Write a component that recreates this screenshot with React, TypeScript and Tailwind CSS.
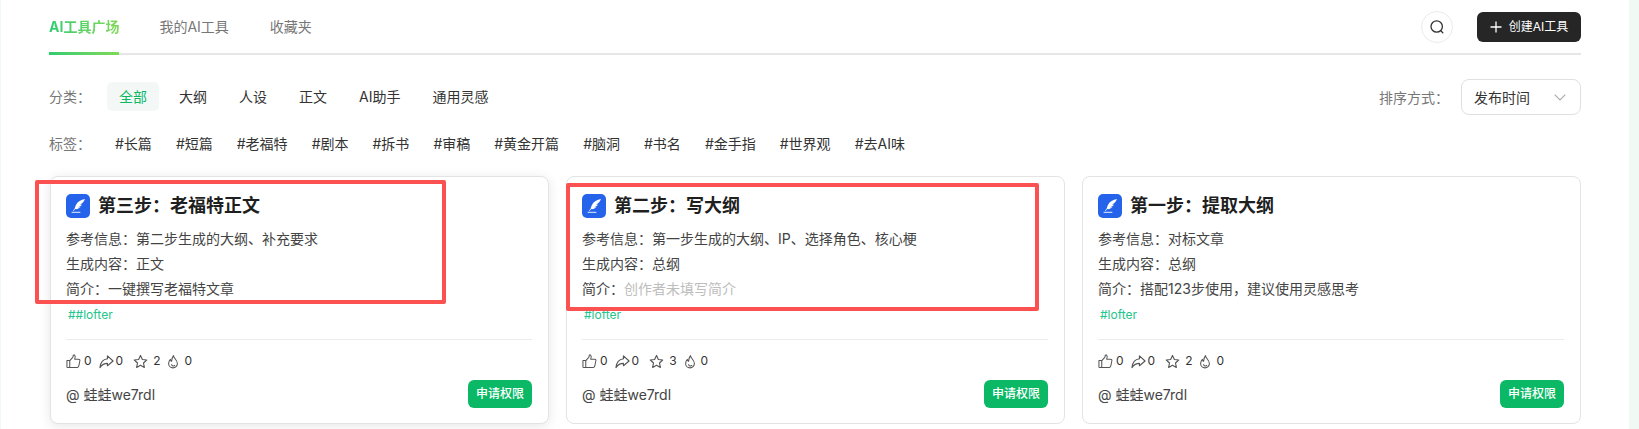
import React from "react";

const font = { fontFamily: 'Inter, "Noto Sans CJK SC", "Noto Sans", sans-serif' };
const C = "\uFF1A";
const D = "\uFF0C";

function Quill() {
  return (
    <svg viewBox="0 0 24 24" className="w-[24px] h-[24px] shrink-0">
      <rect width="24" height="24" rx="5" fill="#2563eb" />
      <path d="M19 5c-4 .6-7.500 2.600-9.200 6.200-.6 1.300-1 2.600-1.200 3.600l-1.600 2 .5.3 1.800-2c2 .2 4-.6 5.200-2-1 .2-1.800.1-2.400-.1 1.600-.3 3-1 4-2.200-.8.1-1.400 0-1.900-.2C16.600 9.200 18 7.300 19 5z" fill="#fff" />
      <path d="M6 18.300h8" stroke="#fff" strokeWidth="1" strokeLinecap="round" opacity="0.9" />
    </svg>
  );
}

const Like = () => (
  <svg viewBox="0 0 16 16" className="w-[15px] h-[15px]" fill="none" stroke="#555" strokeWidth="1.100" strokeLinejoin="round">
    <path d="M1 7h3v7.500H1.800a.8.800 0 0 1-.8-.8z" />
    <path d="M4 7l3-3.200c.4-.5.700-1.200.700-2.300 0-.6.900-.8 1.500-.2.800.8.800 2.400.1 4.200h4.200c.9 0 1.500.8 1.300 1.700l-1.200 5.800c-.2.900-.8 1.500-1.700 1.500H4" />
  </svg>
);
const Share = () => (
  <svg viewBox="0 0 16 16" className="w-[15px] h-[15px]" fill="none" stroke="#555" strokeWidth="1.200" strokeLinejoin="round">
    <path d="M9 2l6 5.500L9 12.500V10C5.500 10 3 11.500 1 14.500 1.500 9.500 4.500 5.500 9 5z" />
  </svg>
);
const Star = () => (
  <svg viewBox="0 0 16 16" className="w-[15px] h-[15px]" fill="none" stroke="#555" strokeWidth="1.200" strokeLinejoin="round">
    <path d="M8 1.500l2 4.300 4.600.6-3.400 3.200.9 4.700L8 12l-4.100 2.300.9-4.700L1.400 6.400 6 5.800z" />
  </svg>
);
const Flame = () => (
  <svg viewBox="0 0 16 16" className="w-[14px] h-[15px]" fill="none" stroke="#555" strokeWidth="1.200" strokeLinejoin="round" strokeLinecap="round">
    <path d="M8.500 1.200C9 4.500 13 6.500 13 10.300A5 5 0 0 1 3 10.300C3 8 4.200 6.300 5 5.500c.2 1.200.7 1.900 1.400 2.300.2-2.600.8-5 2.100-6.600z" />
    <path d="M6.500 11.500a2 2 0 0 0 3.500 1" />
  </svg>
);

function Stat({ icon, n, cls }: { icon: React.ReactNode; n: number; cls: string }) {
  return (
    <div className={`flex items-center ${cls}`}>
      {icon}
      <span className="text-[12px] text-[#333]">{n}</span>
    </div>
  );
}

type Card = {
  title: string;
  ref_: string;
  gen: string;
  intro: string;
  muted?: boolean;
  tag: string;
  like: number;
  fwd: number;
  star: number;
  hot: number;
  shadow?: boolean;
  box?: string;
};

function ToolCard({ c }: { c: Card }) {
  return (
    <div
      className={`relative flex-1 h-[248px] bg-white rounded-[8px] border border-[#e3e3e3] pl-[15px] pr-[16px] pt-[17px] ${
        c.shadow ? "shadow-[0_2px_12px_rgba(0,0,0,0.10)]" : ""
      }`}
    >
      <div className="flex items-center gap-[8px] h-[24px]">
        <Quill />
        <span className="text-[18px] leading-[24px] font-bold text-[#1f1f1f]">{c.title}</span>
      </div>
      <div className="mt-[8px] text-[14px] leading-[25px] text-[#444]">
        <div>参考信息{C}{c.ref_}</div>
        <div>生成内容{C}{c.gen}</div>
        <div>
          简介{C}<span className={c.muted ? "text-[#bdbdbd]" : ""}>{c.intro}</span>
        </div>
      </div>
      <div className="mt-[1px] pl-[2px] text-[12px] leading-[25px] text-[#22c58b]">{c.tag}</div>
      <div className="mt-[12px] border-t border-[#ececec]" />
      <div className="mt-[13px] h-[16px] flex items-center">
        <Stat icon={<Like />} n={c.like} cls="gap-[3px]" />
        <Stat icon={<Share />} n={c.fwd} cls="gap-[2px] ml-[7px]" />
        <Stat icon={<Star />} n={c.star} cls="gap-[5px] ml-[10px]" />
        <Stat icon={<Flame />} n={c.hot} cls="gap-[4px] ml-[6px]" />
      </div>
      <div className="mt-[11px] flex items-center justify-between">
        <span className="text-[14px] text-[#444]">@ 蛙蛙we7rdl</span>
        <button className="w-[64px] h-[28px] rounded-[6px] bg-[#0bb866] text-white text-[12px] font-medium">申请权限</button>
      </div>
      {c.box && <div className={`absolute border-[4px] border-[#fb5151] rounded-[2px] pointer-events-none ${c.box}`} />}
    </div>
  );
}

const cards: Card[] = [
  {
    title: `第三步${C}老福特正文`,
    ref_: "第二步生成的大纲、补充要求",
    gen: "正文",
    intro: "一键撰写老福特文章",
    tag: "##lofter",
    like: 0,
    fwd: 0,
    star: 2,
    hot: 0,
    shadow: true,
    box: "left-[-16px] top-[3px] w-[411px] h-[124px]",
  },
  {
    title: `第二步${C}写大纲`,
    ref_: "第一步生成的大纲、IP、选择角色、核心梗",
    gen: "总纲",
    intro: "创作者未填写简介",
    muted: true,
    tag: "#lofter",
    like: 0,
    fwd: 0,
    star: 3,
    hot: 0,
    box: "left-[-1px] top-[6px] w-[473px] h-[128px]",
  },
  {
    title: `第一步${C}提取大纲`,
    ref_: "对标文章",
    gen: "总纲",
    intro: `搭配123步使用${D}建议使用灵感思考`,
    tag: "#lofter",
    like: 0,
    fwd: 0,
    star: 2,
    hot: 0,
  },
];

const cats = ["大纲", "人设", "正文", "AI助手", "通用灵感"];
const tags = ["#长篇", "#短篇", "#老福特", "#剧本", "#拆书", "#审稿", "#黄金开篇", "#脑洞", "#书名", "#金手指", "#世界观", "#去AI味"];

export default function App() {
  return (
    <div className="w-[1639px] h-[429px] overflow-hidden flex bg-[#f0f9f4]" style={font}>
      <div className="w-[1px] shrink-0" />
      <div className="w-[1628px] shrink-0 bg-white pl-[48px] pr-[48px]">
        <div className="h-[55px] border-b-2 border-[#e6e6e6] flex justify-between">
          <div className="flex gap-[41px] text-[14px]">
            <div className="relative h-[55px] pt-[17px] leading-[20px] font-bold">
              <span className="bg-gradient-to-r from-[#2ecc71] to-[#7ed957] bg-clip-text text-transparent">AI工具广场</span>
              <div className="absolute left-0 right-0 bottom-0 h-[3px] bg-gradient-to-r from-[#2ecc71] to-[#7ed957]" />
            </div>
            <div className="pt-[17px] leading-[20px] text-[#777] -ml-[1px]">我的AI工具</div>
            <div className="pt-[17px] leading-[20px] text-[#777]">收藏夹</div>
          </div>
          <div className="flex gap-[24px] pt-[11px]">
            <div className="w-[32px] h-[32px] rounded-full border border-[#ebebeb] flex items-center justify-center">
              <svg viewBox="0 0 16 16" className="w-[16px] h-[16px]" fill="none" stroke="#333" strokeWidth="1.300" strokeLinecap="round">
                <circle cx="7.700" cy="7.500" r="5.700" />
                <path d="M11.800 11.800l2 2" />
              </svg>
            </div>
            <button className="w-[104px] h-[30px] mt-[1px] rounded-[6px] bg-[#262626] text-white text-[12px] flex items-center justify-center gap-[7px]">
              <svg viewBox="0 0 12 12" className="w-[12px] h-[12px]" stroke="#fff" strokeWidth="1.300">
                <path d="M6 .5v11M.5 6h11" />
              </svg>
              创建AI工具
            </button>
          </div>
        </div>

        <div className="mt-[24px] h-[36px] flex items-center justify-between">
          <div className="flex items-center text-[14px] -translate-y-[1px]">
            <span className="text-[#777] w-[58px]">分类{C}</span>
            <div className="flex items-center gap-[8px] text-[#333]">
              <span className="px-[12px] h-[29px] leading-[29px] rounded-[5px] bg-[#f3f8f7] text-[#0bb866]">全部</span>
              {cats.map((c) => (
                <span key={c} className="px-[12px] h-[29px] leading-[29px]">
                  {c}
                </span>
              ))}
            </div>
          </div>
          <div className="flex items-center gap-[12px] text-[14px]">
            <span className="text-[#777]">排序方式{C}</span>
            <div className="w-[120px] h-[36px] rounded-[8px] border border-[#e0e0e0] pl-[12px] pr-[13px] flex items-center justify-between text-[#333]">
              发布时间
              <svg viewBox="0 0 12 12" className="w-[14px] h-[14px]" fill="none" stroke="#aaa" strokeWidth="1">
                <path d="M1.500 4l4.500 4.500L10.500 4" />
              </svg>
            </div>
          </div>
        </div>

        <div className="mt-[14px] h-[28px] flex items-center text-[14px]">
          <span className="text-[#777] w-[66px]">标签{C}</span>
          <div className="flex items-center gap-[24px] text-[#333]">
            {tags.map((t) => (
              <span key={t}>{t}</span>
            ))}
          </div>
        </div>

        <div className="mt-[19px] pl-[1px] flex gap-[17px]">
          {cards.map((c) => (
            <ToolCard key={c.title} c={c} />
          ))}
        </div>
      </div>
    </div>
  );
}
